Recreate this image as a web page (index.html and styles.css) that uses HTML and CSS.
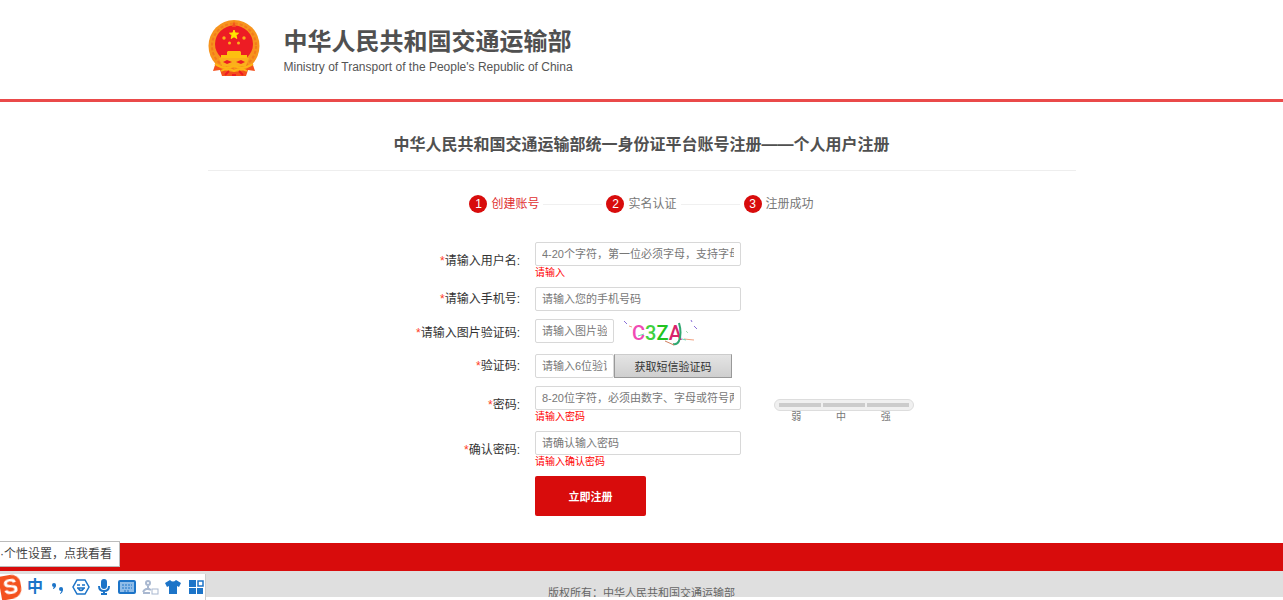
FILE: index.html
```
<!doctype html>
<html lang="zh-CN">
<head>
	<meta charset="UTF-8">
	<title>个人用户注册</title>
	<link rel="stylesheet" href="styles.css">
</head>
<body>
	<header class="header">
		<div class="wrap header_in">
			<svg class="emblem" viewBox="0 0 52 57">
				<path d="M8 42 L5 51 L12 50 L14 56 L38 56 L40 50 L47 51 L44 42 Z" fill="#f4511e"/>
				<ellipse cx="26" cy="26" rx="25.500" ry="26" fill="#f7941d"/>
				<ellipse cx="26" cy="26" rx="22" ry="22.500" fill="none" stroke="#f47a1c" stroke-width="2" stroke-dasharray="3 2"/>
				<ellipse cx="26" cy="24" rx="19" ry="18.500" fill="#ed1c24"/>
				<path d="M26 1 L28 7 L24 7 Z" fill="#f4511e"/>
				<path d="M26 10 L27.200 13 L30.500 13.200 L28 15.300 L28.800 18.500 L26 16.700 L23.200 18.500 L24 15.300 L21.500 13.200 L24.800 13 Z" fill="#ffe600" stroke="#ffe600"/>
				<g fill="#fbb01c">
					<circle cx="16" cy="18" r="1.700"/><circle cx="36" cy="18" r="1.700"/>
					<circle cx="21.500" cy="23" r="1.500"/><circle cx="30.500" cy="23" r="1.500"/>
				</g>
				<path d="M19 32 L20 31 H32 L33 32 V35 H39 V38 H13 V35 H19 Z" fill="#fdc010"/>
				<path d="M11 38 H41 L38 46 H14 Z" fill="#fbb01b"/>
				<path d="M15 42 L19 40 L24 42 L19 44 Z M37 42 L33 40 L28 42 L33 44 Z" fill="#ed1c24"/>
				<path d="M7 44 Q16 50 26 46 Q36 50 45 44 M13 51 Q20 47 26 51 Q32 47 39 51" fill="none" stroke="#fdb515" stroke-width="2"/>
				<path d="M17 55 L21 51 M35 55 L31 51 M24 55 H28" stroke="#ed1c24" stroke-width="2"/>
			</svg>
			<div class="site">
				<p class="site_cn">中华人民共和国交通运输部</p>
				<p class="site_en">Ministry of Transport of the People's Republic of China</p>
			</div>
		</div>
	</header>

	<main class="wrap">
		<h1 class="title">中华人民共和国交通运输部统一身份证平台账号注册——个人用户注册</h1>

		<ol class="steps">
			<li class="on"><i>1</i>创建账号</li>
			<li><i>2</i>实名认证</li>
			<li><i>3</i>注册成功</li>
		</ol>

		<form class="form">
			<div class="row">
				<label for="user"><em>*</em>请输入用户名:</label>
				<div class="field">
					<input type="text" id="user" placeholder="4-20个字符，第一位必须字母，支持字母">
					<p class="error">请输入</p>
				</div>
			</div>
			<div class="row">
				<label for="phone"><em>*</em>请输入手机号:</label>
				<div class="field">
					<input type="text" id="phone" placeholder="请输入您的手机号码">
				</div>
			</div>
			<div class="row">
				<label for="captcha"><em>*</em>请输入图片验证码:</label>
				<div class="field inline">
					<input type="text" id="captcha" class="short" placeholder="请输入图片验证码">
					<svg class="captcha" viewBox="0 0 80 27">
						<text x="10" y="21" class="captcha_text"><tspan fill="#f04bb4">C</tspan><tspan fill="#3fd13f">3</tspan><tspan fill="#22c322">Z</tspan><tspan fill="#d8246c">A</tspan></text>
						<g fill="none">
							<path d="M57 4 Q60 14 57 22 Q55 26 51 25" stroke="#2fa870" stroke-width="2"/>
							<path d="M2 2 L5 5 M72 7 L75 10 M69 1 L70 3" stroke="#8a6fd8"/>
							<path d="M7 7 L10 8 M62 20 L72 21" stroke="#f0a080"/>
							<path d="M16 17 L22 15 M60 20 L64 21" stroke="#6fd8b0"/>
							<path d="M43 22 L52 26" stroke="#d08060"/>
							<path d="M64 12 L66 14" stroke="#a8d8b0"/>
						</g>
					</svg>
				</div>
			</div>
			<div class="row">
				<label for="sms"><em>*</em>验证码:</label>
				<div class="field inline">
					<input type="text" id="sms" class="short" placeholder="请输入6位验证码">
					<button type="button" class="sms_btn">获取短信验证码</button>
				</div>
			</div>
			<div class="row">
				<label for="pwd"><em>*</em>密码:</label>
				<div class="field">
					<div class="pwd_line">
						<input type="password" id="pwd" placeholder="8-20位字符，必须由数字、字母或符号两种">
						<div class="strength">
							<div class="bars"><span></span><span></span><span></span></div>
							<div class="levels"><span>弱</span><span>中</span><span>强</span></div>
						</div>
					</div>
					<p class="error">请输入密码</p>
				</div>
			</div>
			<div class="row">
				<label for="pwd2"><em>*</em>确认密码:</label>
				<div class="field">
					<input type="password" id="pwd2" placeholder="请确认输入密码">
					<p class="error">请输入确认密码</p>
				</div>
			</div>
			<div class="row">
				<button type="submit" class="submit">立即注册</button>
			</div>
		</form>
	</main>

	<footer class="footer">
		<p>版权所有：中华人民共和国交通运输部</p>
	</footer>

	<!-- 输入法工具条 -->
	<div class="ime_tip">·个性设置，点我看看</div>
	<div class="ime">
		<span class="ime_logo">S</span>
		<span class="ime_cn">中</span>
		<svg viewBox="0 0 18 18" fill="#1c74c8"><circle cx="5" cy="7" r="2"/><path d="M7 7 Q7 10 4 11 L4 10 Q6 9 5 7 Z"/><circle cx="12" cy="11" r="2"/><path d="M14 11 Q14 15 11 16 L11 15 Q13 14 12 11 Z"/></svg>
		<svg viewBox="0 0 18 18" fill="none" stroke="#1c74c8" stroke-width="1.500"><path d="M5 2 H13 L17 9 L13 16 H5 L1 9 Z"/><path d="M5 7 H8 M10 7 H13 M5 10 H13 M6 10 Q9 15 12 10"/></svg>
		<svg viewBox="0 0 18 18" fill="none" stroke="#1c74c8" stroke-width="2"><rect x="7" y="2" width="4" height="8" rx="2" fill="#1c74c8"/><path d="M4 8 Q4 13 9 13 Q14 13 14 8 M9 13 V17 M6 16 H12"/></svg>
		<svg viewBox="0 0 18 18" fill="none" stroke="#1c74c8" stroke-width="2"><rect x="1" y="3" width="16" height="12" rx="1" fill="#8fbce8"/><path d="M4 7 H14 M4 10 H14 M6 13 H12" stroke-dasharray="2 1" stroke-width="1"/></svg>
		<svg viewBox="0 0 18 18" fill="none" stroke="#a9b8d0" stroke-width="2"><circle cx="7" cy="5" r="2"/><path d="M7 8 V11 M2 14 Q5 9 10 12 M2 15 H9"/><rect x="11" y="11" width="6" height="5" stroke-width="1"/></svg>
		<svg viewBox="0 0 18 18" fill="#1c74c8"><path d="M6 2 Q9 5 12 2 L17 5 L15 9 L13 8 V16 H5 V8 L3 9 L1 5 Z"/></svg>
		<svg viewBox="0 0 18 18" fill="#1c74c8"><path d="M2 2 H9 V9 H2 Z M2 10 H9 V16 H2 Z M10 10 H16 V16 H10 Z"/><rect x="11" y="3" width="5" height="5" fill="none" stroke="#1c74c8" stroke-width="1.500"/></svg>
	</div>
</body>
</html>
```
FILE: styles.css
```
*{
	margin: 0;
	padding: 0;
	box-sizing: border-box;
	list-style-type: none;
}
body{
	background: #fff;
	color: #444;
	font: 12px "Liberation Sans","Noto Sans CJK SC",sans-serif;
}
input,button{
	font-family: inherit;
}
em,i{
	font-style: normal;
}
.wrap{
	max-width: 868px;
	margin: 0 auto;
}
.header{
	border-bottom: 3px solid #ea4a4a;
}
.header_in{
	display: flex;
	align-items: flex-end;
	gap: 24px;
	padding: 20px 0 22px;
}
.emblem{
	width: 52px;
	height: 57px;
}
.site_cn{
	font-size: 24px;
	line-height: 30px;
	font-weight: bold;
	color: #505050;
}
.site_en{
	font-size: 12px;
	line-height: 20px;
	color: #555;
}

.title{
	padding: 31px 0 13px;
	border-bottom: 1px solid #eee;
	text-align: center;
	font-size: 16px;
	line-height: 24px;
	color: #505050;
}
.steps{
	display: flex;
	justify-content: center;
	margin-top: 24px;
	color: #777;
}
.steps li{
	display: flex;
	align-items: center;
	line-height: 18px;
}
.steps li + li::before{
	content: "";
	width: 59px;
	margin: 0 4px;
	border-top: 1px solid #f0f0f0;
}
.steps i{
	width: 18px;
	height: 18px;
	margin-right: 4px;
	border-radius: 50%;
	background: #d80c0c;
	color: #fff;
	text-align: center;
}
.steps .on{
	color: #e03030;
}

.form{
	display: grid;
	gap: 8px;
	margin: 29px 0 27px;
}
.row{
	display: grid;
	grid-template-columns: 36% 1fr;
	column-gap: 15px;
	align-items: center;
}
.row label{
	text-align: right;
	line-height: 18px;
	color: #333;
}
.row em{
	color: #ff3c1e;
}
.row input{
	display: block;
	width: 206px;
	height: 24px;
	padding: 0 6px;
	border: 1px solid #d8d8d8;
	border-radius: 2px;
	font-size: 11px;
}
.row .short{
	width: 79px;
}
.row input::placeholder{
	color: #777;
}
.error{
	line-height: 13px;
	font-size: 10px;
	color: #f00;
}
.inline{
	display: flex;
	align-items: flex-start;
}
.captcha{
	width: 80px;
	height: 27px;
	margin-left: 8px;
}
.captcha_text{
	font-family: Roboto,sans-serif;
	font-size: 20px;
	font-weight: 500;
}
.sms_btn{
	width: 118px;
	height: 24px;
	border: 1px solid #999;
	border-top-color: #ccc;
	background: linear-gradient(#e4e4e4,#cfcfcf);
	font-size: 11px;
	color: #333;
}
.pwd_line{
	position: relative;
}
.strength{
	position: absolute;
	left: 239px;
	top: 13px;
	width: 140px;
}
.bars{
	display: flex;
	gap: 2px;
	padding: 3px 4px;
	border: 1px solid #ddd;
	border-radius: 6px;
	background: #f0f0f0;
}
.bars span{
	flex: 1;
	height: 4px;
	background: #ccc;
}
.levels{
	display: flex;
	padding-right: 6px;
	font-size: 10px;
	line-height: 12px;
	color: #777;
}
.levels span{
	flex: 1;
	text-align: center;
}
.submit{
	grid-column: 2;
	width: 111px;
	height: 40px;
	border: 0;
	border-radius: 2px;
	background: #d80c0c;
	color: #fff;
	font-size: 11px;
	font-weight: bold;
}

.footer{
	border-top: 28px solid #d80c0c;
	background: #dfdfdf;
	height: 54px;
	overflow: hidden;
	text-align: center;
}
.footer p{
	padding-top: 14px;
	font-size: 11px;
	line-height: 16px;
	color: #666;
}

.ime_tip{
	position: fixed;
	left: 0;
	bottom: 33px;
	padding: 0 7px 0 0;
	border: 1px solid #bbb;
	border-left: 0;
	background: #fff;
	line-height: 24px;
}
.ime{
	position: fixed;
	left: 0;
	bottom: 0;
	display: flex;
	align-items: center;
	gap: 5px;
	height: 26px;
	border-right: 1px solid #ccc;
	background: #fff;
}
.ime svg{
	width: 18px;
	height: 18px;
}
.ime_logo{
	width: 21px;
	height: 24px;
	border-radius: 0 9px 10px 0;
	background: #f4511e;
	color: #fff;
	font-size: 22px;
	line-height: 24px;
	font-weight: bold;
	text-align: center;
	transform: rotate(-10deg);
}
.ime_cn{
	width: 18px;
	text-align: center;
	font-size: 16px;
	line-height: 18px;
	font-weight: bold;
	color: #1c74c8;
}
```
